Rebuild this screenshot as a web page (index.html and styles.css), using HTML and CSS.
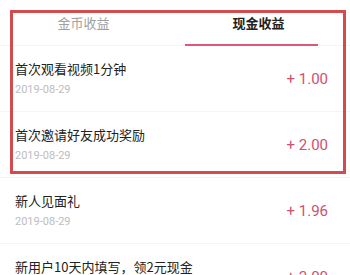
FILE: index.html
```html
<!DOCTYPE html>
<html lang="zh">
<head>
<meta charset="utf-8">
<link rel="stylesheet" href="styles.css">
</head>
<body>
<div class="page">
  <div class="tabs">
    <div class="tab">金币收益</div>
    <div class="tab active"><span>现金收益</span><i class="underline"></i></div>
  </div>
  <div class="list">
    <div class="row">
      <div class="info"><div class="title">首次观看视频1分钟</div><div class="date">2019-08-29</div></div>
      <div class="amount">+ 1.00</div>
    </div>
    <div class="row">
      <div class="info"><div class="title">首次邀请好友成功奖励</div><div class="date">2019-08-29</div></div>
      <div class="amount">+ 2.00</div>
    </div>
    <div class="row">
      <div class="info"><div class="title">新人见面礼</div><div class="date">2019-08-29</div></div>
      <div class="amount">+ 1.96</div>
    </div>
    <div class="row">
      <div class="info"><div class="title">新用户10天内填写，领2元现金</div><div class="date">2019-08-29</div></div>
      <div class="amount">+ 2.00</div>
    </div>
  </div>
  <div class="highlight"></div>
</div>
</body>
</html>
```
FILE: styles.css
```css
html, body {
  margin: 0;
  padding: 0;
  background: #ffffff;
}
body {
  font-family: Roboto, "Noto Sans CJK SC", sans-serif;
  width: 350px;
  height: 275px;
  overflow: hidden;
}
.page {
  position: relative;
}
.tabs {
  display: grid;
  grid-template-columns: 167px 1fr;
  height: 46px;
  border-bottom: 1px solid #f4f4f4;
  box-sizing: border-box;
}
.tab {
  display: flex;
  flex-direction: column;
  align-items: center;
  padding-top: 15px;
  font-family: "Noto Sans CJK SC", sans-serif;
  font-size: 13px;
  line-height: 16px;
  color: #a0a0a0;
}
.tab.active {
  color: #222222;
  font-weight: bold;
}
.underline {
  display: block;
  align-self: flex-start;
  margin-left: 18px;
  margin-top: 13px;
  width: 133px;
  height: 2px;
  background: #e0577a;
}
.row {
  display: flex;
  justify-content: space-between;
  align-items: center;
  height: 66px;
  padding: 0 22px 0 15px;
  border-bottom: 1px solid #f4f4f4;
  box-sizing: border-box;
}
.title {
  font-family: "Noto Sans CJK SC", sans-serif;
  font-size: 13px;
  line-height: 16px;
  color: #222222;
}
.date {
  margin-top: 6px;
  font-family: Roboto, sans-serif;
  font-size: 11px;
  line-height: 13px;
  color: #bdbdbd;
}
.amount {
  font-family: Roboto, sans-serif;
  font-size: 15px;
  color: #d24e6e;
}
.highlight {
  position: absolute;
  left: 10px;
  top: 10px;
  width: 336px;
  height: 164px;
  border: 3px solid #d14b4f;
  box-sizing: border-box;
}
```
